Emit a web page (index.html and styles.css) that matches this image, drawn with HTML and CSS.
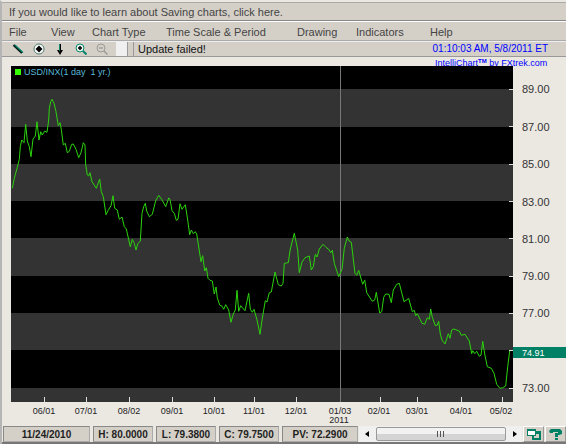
FILE: index.html
```html
<!DOCTYPE html>
<html lang="en">
<head>
    <meta charset="UTF-8">
    <title>IntelliChart</title>
    <link rel="stylesheet" href="styles.css">
</head>
<body>
<div class="app">
    <a class="notice" href="#">If you would like to learn about Saving charts, click here.</a>
    <nav class="menu">
        <button class="menu-item file">File</button>
        <button class="menu-item view">View</button>
        <button class="menu-item type">Chart Type</button>
        <button class="menu-item scale">Time Scale &amp; Period</button>
        <button class="menu-item drawing">Drawing</button>
        <button class="menu-item indicators">Indicators</button>
        <button class="menu-item">Help</button>
    </nav>
    <div class="toolbar">
        <div class="tools">
            <button class="tool" aria-label="Line">
                <svg width="12" height="12"><path d="M1.500 2L10 10" stroke="#001d18" stroke-width="2.200"/><path d="M3 2L11 9.500" stroke="#0b8a6c" stroke-width="1.200"/></svg>
            </button>
            <button class="tool" aria-label="Point">
                <svg width="12" height="12"><circle cx="6" cy="6" r="5" fill="#fff" stroke="#4c7a6c"/><path d="M6 2.500L9.500 6L6 9.500L2.500 6Z"/></svg>
            </button>
            <button class="tool" aria-label="Arrow">
                <svg width="12" height="12"><path d="M6 1V9" stroke="#000" stroke-width="2"/><path d="M3 7H9L6 12Z"/><path d="M5.500 1V8" stroke="#0b8a6c"/></svg>
            </button>
            <button class="tool" aria-label="Zoom in">
                <svg width="12" height="12"><circle cx="5" cy="5" r="4" fill="#e9f1ec" stroke="#0b8a6c"/><path d="M3 5H7M5 3V7" stroke="#000" stroke-width="1.500"/><path d="M8 8L11.500 11.500" stroke="#06826a" stroke-width="2"/></svg>
            </button>
            <button class="tool" aria-label="Zoom out" disabled>
                <svg width="12" height="12"><circle cx="5" cy="5" r="4" fill="none" stroke="#999"/><path d="M3 5H7" stroke="#888"/><path d="M8 8L11.500 11.500" stroke="#999" stroke-width="1.500"/></svg>
            </button>
        </div>
        <span class="swatch"></span>
        <span class="message">Update failed!</span>
        <time class="clock">01:10:03 AM, 5/8/2011 ET</time>
    </div>

    <svg class="chart" viewBox="2 57 564 368">
        <text class="brand" x="435" y="66">IntelliChart<tspan class="tm" dy="-3">TM</tspan><tspan dy="3"> by FXtrek.com</tspan></text>
        <rect x="11" y="66" width="502" height="336"/>
        <g class="bands">
            <rect x="11" y="89" width="502" height="38"/>
            <rect x="11" y="164" width="502" height="37"/>
            <rect x="11" y="238" width="502" height="38"/>
            <rect x="11" y="313" width="502" height="37"/>
            <rect x="11" y="388" width="502" height="14"/>
        </g>
        <path class="cursor" d="M340.500 66V402"/>
        <path class="ticks" d="M44.500 397V402M86.500 397V402M129.500 397V402M172.500 397V402M214.500 397V402M254.500 397V402M296.500 397V402M380.500 397V402M417.500 397V402M461.500 397V402M502.500 397V402M509 89.500H513M509 126.500H513M509 164.500H513M509 201.500H513M509 238.500H513M509 276.500H513M509 313.500H513M509 350.500H513M509 388.500H513"/>
        <polyline class="price" points="12.3,188.3 14.3,178.3 17.3,167.3 19.3,159.3 20.3,146.7 21.7,140 24,142.7 25.7,124.3 27.3,141 29.3,146.7 31,156.7 33,139 35.3,136 37,121.7 39,140 40.7,131.7 42.3,135 44.7,131 47,132.3 48.7,120 49.3,108.3 50.7,101.7 52,99.3 54,103.3 56,111.7 58.3,125.7 60,122.7 61.3,129.3 63.3,145 65.3,143.3 67.3,152.7 69.3,151.3 71.7,144.3 73.3,144 76,149.3 78.7,157.7 81,152.7 83.3,142.7 85,145 85.7,165 87.3,175 88.7,176 90,172.7 92,181.7 96.3,188.3 99.7,179 101.3,191.7 103.3,196.7 106,214.7 108,210.7 111,205.7 113,195.7 114.7,208.3 117.3,210 119.3,219.3 122,217 124.3,226.7 126.3,229 130.3,246.7 132.3,239.3 134.3,243.3 136,250 137.7,244 140.3,241 142,213.3 143.7,206.7 145.3,203.3 146.7,211 149.3,216.7 152.3,214.3 155.7,200.7 158.7,195.3 161.7,199.3 165.7,206.7 168.7,198 170,199.3 172,210.7 174.3,213.3 176.3,220.3 178,219.3 180,203.7 182,209.3 185.3,204.7 187.7,220 189.7,234.7 191.3,230 193.3,233.7 195.3,231.7 196.7,234 201,261.7 202.7,255.7 204.7,271 206.3,267.7 208,278.3 210,280.3 212.3,281 214.3,294 216,287 217.3,297.7 219.7,305 222,306.3 223.7,309.3 225.7,304.7 228.7,310 231,322.3 233.3,314 235.3,310 237,290.3 238.7,311.3 240.7,305.7 245,310.7 248.7,293.3 250.3,309.3 252.3,312.3 254,309.3 257,320 260,334.3 262.3,318.3 265.3,300.7 267,302 269.3,292.7 271.3,292 275,272 278.3,284.7 281.3,286 283,283.3 284.3,263.3 288.3,262.7 290.3,249 294.3,233.3 297.7,250 299.3,272.7 302,262 305,257.7 309.3,256 311.3,270 313.3,266.7 315.3,254.3 317,257 319.3,249 323,244.3 326,247.3 328.7,249.3 330.7,252.7 332.3,250.3 334.3,263.3 338.7,276.7 342,269.3 344.3,248.3 347.3,237 349,241 351.3,242.3 353,256.7 355,273.3 356.7,275.3 358.7,270.3 362.7,284.3 364.7,280 366.7,292.7 372.3,301.3 374.7,300 376.3,292.3 379.7,313 381.7,311.7 383.7,297.3 385.7,294 389,294.3 391.3,302.7 393.3,290 396.7,284.3 399.3,283.3 404,301.7 408.7,298.5 412.3,311.7 414.3,310.3 415.7,315.7 417.3,313.7 422,323.3 424.7,324.3 427.3,317.7 429.3,319.3 430.7,309 432.3,317.3 435.3,325.7 437.3,325 438.7,321.3 440.3,334 442,340 445,344 448.3,333.7 450,338.3 451.7,330 453.7,329 459.3,331 461.3,335.3 465,334.3 469.3,341 471.7,353.7 472.7,350.7 474.7,353.7 476.7,351.3 479.3,356.3 481,355 482.7,341.3 484.7,354 487.3,366.7 491.3,368.3 494,373.3 496.7,384.3 500,388.3 502.7,387.7 505.7,386 507.7,366.7 509.7,351"/>
        <rect class="key" x="15" y="69" width="6" height="6"/>
        <text class="symbol" x="24" y="75">USD/INX(1 day&#160; 1 yr.)</text>
        <g class="prices">
            <text x="522" y="93">89.00</text>
            <text x="522" y="131">87.00</text>
            <text x="522" y="168">85.00</text>
            <text x="522" y="206">83.00</text>
            <text x="522" y="243">81.00</text>
            <text x="522" y="280">79.00</text>
            <text x="522" y="317">77.00</text>
            <text x="522" y="392">73.00</text>
        </g>
        <rect class="last" x="513" y="347" width="53" height="11"/>
        <text class="last-price" x="522" y="356">74.91</text>
        <g class="dates">
            <text x="44" y="414">06/01</text>
            <text x="86" y="414">07/01</text>
            <text x="129" y="414">08/02</text>
            <text x="172" y="414">09/01</text>
            <text x="214" y="414">10/01</text>
            <text x="254" y="414">11/01</text>
            <text x="296" y="414">12/01</text>
            <text x="340" y="414">01/03</text>
            <text x="339" y="423">2011</text>
            <text x="379" y="414">02/01</text>
            <text x="417" y="414">03/01</text>
            <text x="461" y="414">04/01</text>
            <text x="501" y="414">05/02</text>
        </g>
    </svg>

    <div class="status">
        <div class="cells">
            <span class="cell date">11/24/2010</span>
            <span class="cell">H: 80.0000</span>
            <span class="cell">L: 79.3800</span>
            <span class="cell">C: 79.7500</span>
            <span class="cell pv">PV: 72.2900</span>
        </div>
        <div class="scroll">
            <button class="arrow" aria-label="Scroll left"><svg width="4" height="6"><path d="M4 0V6L0 3Z"/></svg></button>
            <input class="range" type="range" aria-label="Chart position" value="50">
            <button class="arrow" aria-label="Scroll right"><svg width="4" height="6"><path d="M0 0V6L4 3Z"/></svg></button>
        </div>
        <button class="corner" aria-label="Detach window">
            <svg width="16" height="12"><path d="M6 3H15V12H6Z" fill="#008064"/><path d="M8 6H13V10H8Z" fill="#d4d0c8"/><path d="M1 1H10V8H1Z" fill="#008064"/><path d="M2 3H9V7H2Z" fill="#fff"/></svg>
        </button>
        <button class="corner" aria-label="Help">
            <svg width="16" height="12"><path d="M1 3L3 1H12L14 3V6L11 7H10V9H7V5H10V4H5V5H2Z" fill="#008064"/><path d="M7 10H10V12H7Z" fill="#008064"/></svg>
        </button>
    </div>
</div>
</body>
</html>
```
FILE: styles.css
```css
* {
    box-sizing: border-box;
}
body {
    margin: 0;
    background-color: #ebe8e2;
    font-family: "Liberation Sans", Arial, sans-serif;
    font-size: 11px;
    color: #444;
}
button {
    display: flex;
    align-items: center;
    justify-content: center;
    padding: 0;
    border: 0;
    background: none;
    font: inherit;
    color: inherit;
}
svg {
    display: block;
}
.app {
    border-top: 2px solid #ebe8e2;
    border-left: 2px solid #b5b5b5;
}
.notice {
    display: block;
    height: 19px;
    padding-left: 7px;
    border-top: 1px solid #aaa;
    border-bottom: 1px solid #888;
    background-color: #d4d0c8;
    line-height: 19px;
    color: #444;
    text-decoration: none;
}
.menu {
    display: flex;
    height: 20px;
    padding-left: 7px;
    border-top: 1px solid #fff;
    border-bottom: 1px solid #aaa;
    background-color: #d4d0c8;
}
.file {
    width: 42px;
}
.view {
    width: 41px;
}
.type {
    width: 74px;
}
.scale {
    width: 131px;
}
.drawing {
    width: 59px;
}
.indicators {
    width: 74px;
}
.menu-item {
    justify-content: flex-start;
    padding-top: 2px;
    white-space: nowrap;
}
.toolbar {
    display: flex;
    align-items: center;
    height: 16px;
    padding-right: 18px;
    border-top: 1px solid #eee;
    border-bottom: 1px solid #999;
    background-color: #d4d0c8;
}
.tools {
    display: flex;
    gap: 9px;
    padding-left: 10px;
}
.tool {
    width: 12px;
}
.swatch {
    width: 12px;
    height: 14px;
    margin-left: 8px;
    border-right: 1px solid #999;
    background-color: #f0f0f0;
}
.message {
    margin-left: 5px;
    padding-left: 4px;
    border-left: 1px solid #999;
    line-height: 14px;
    color: #111;
}
.clock {
    margin-left: auto;
    font-size: 10px;
    line-height: 14px;
    color: #00f;
}
.chart {
    width: 100%;
    font-size: 9px;
}
.brand {
    fill: #00f;
}
.tm {
    font-size: 6px;
    font-weight: bold;
}
.bands {
    fill: #333;
}
.cursor {
    stroke: #777;
}
.ticks {
    stroke: #ddd;
}
.price {
    fill: none;
    stroke: #2bd40c;
}
.key {
    fill: #3f0;
}
.symbol {
    fill: #58b8d8;
}
.prices {
    font-size: 11px;
    fill: #333;
}
.last {
    fill: #008064;
}
.last-price {
    fill: #fff;
}
.dates {
    fill: #222;
    text-anchor: middle;
}
.status {
    display: flex;
    gap: 1px;
    height: 18px;
    margin-top: 1px;
    padding-left: 1px;
    border-bottom: 2px solid #777;
    background-color: #ebe8e2;
}
.cells {
    display: flex;
    gap: 3px;
}
.cell {
    width: 60px;
    border: 1px solid #aaa;
    border-top-color: #888;
    border-left-color: #888;
    background-color: #d4d0c8;
    font-size: 10px;
    font-weight: bold;
    line-height: 15px;
    text-align: center;
    white-space: nowrap;
    color: #222;
}
.date {
    width: 87px;
}
.pv {
    width: 76px;
}
.scroll {
    display: flex;
    flex: 1;
    min-width: 0;
    background-color: #f0f0f0;
}
.arrow {
    width: 15px;
}
.range {
    flex: 1;
    min-width: 0;
    height: 16px;
    margin: 0;
    appearance: none;
    background: none;
}
.range::-webkit-slider-thumb {
    appearance: none;
    width: 130px;
    height: 14px;
    border: 1px solid #999;
    border-radius: 2px;
    background:
        repeating-linear-gradient(90deg, #555 0 1px, transparent 1px 3px) center / 7px 6px no-repeat,
        linear-gradient(#f2f2f2 50%, #d4d4d4 50%);
}
.corner {
    width: 21px;
    border: 1px solid #999;
    border-top-color: #fff;
    border-left-color: #fff;
    background-color: #d4d0c8;
}
```
